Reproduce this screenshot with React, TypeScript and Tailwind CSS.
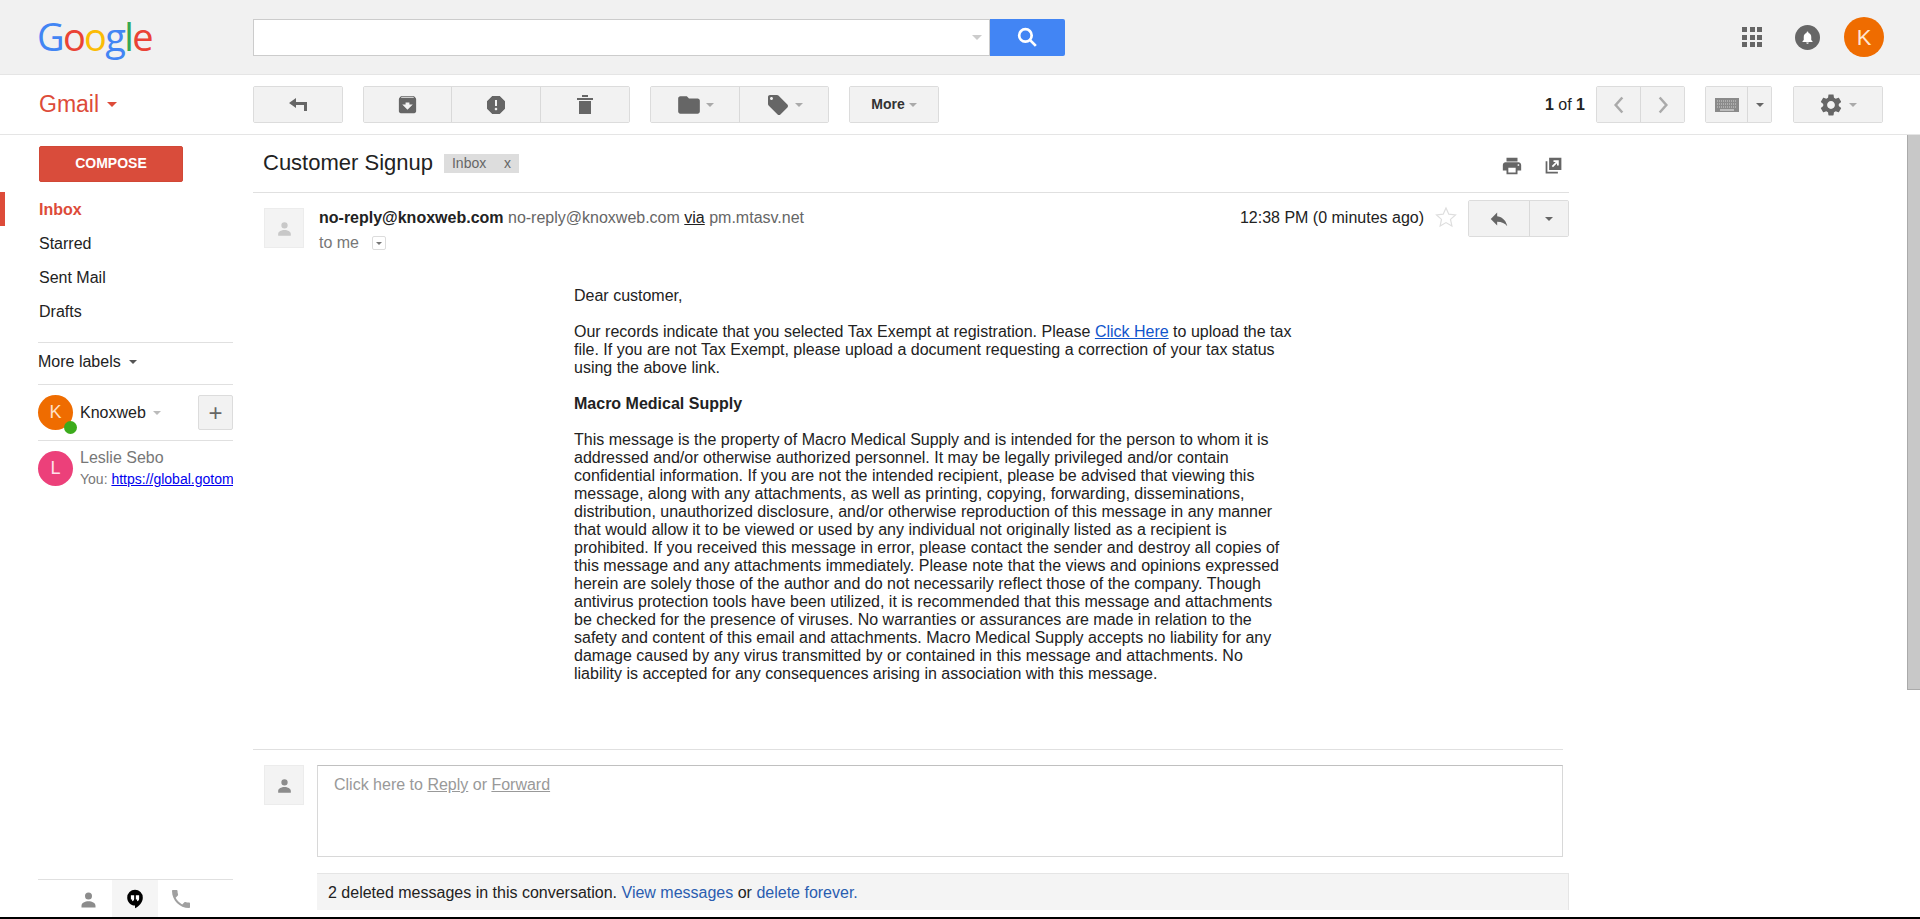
import React from "react";

const Ico = ({ d, className }: { d: string; className: string }) => (
  <svg viewBox="0 0 24 24" className={className} fill="currentColor">
    <path d={d} />
  </svg>
);

const paths = {
  reply: "M10 9V5l-7 7 7 7v-4.1c5 0 8.5 1.6 11 5.1-1-5-4-10-11-11z",
  archive:
    "M20.54 5.23l-1.39-1.68C18.88 3.21 18.47 3 18 3H6c-.47 0-.88.21-1.16.55L3.46 5.23C3.17 5.57 3 6.02 3 6.5V19c0 1.1.9 2 2 2h14c1.1 0 2-.9 2-2V6.5c0-.48-.17-.93-.46-1.27zM12 17.5L6.5 12H10v-2h4v2h3.5L12 17.5zM5.12 5l.81-1h12l.94 1H5.12z",
  spam: "M15.73 3H8.27L3 8.27v7.46L8.27 21h7.46L21 15.73V8.27L15.73 3zM12 17.3c-.72 0-1.3-.58-1.3-1.3 0-.72.58-1.3 1.3-1.3.72 0 1.3.58 1.3 1.3 0 .72-.58 1.3-1.3 1.3zm1-4.3h-2V7h2v6z",
  folder: "M10 4H4c-1.1 0-2 .9-2 2v12c0 1.1.9 2 2 2h16c1.1 0 2-.9 2-2V8c0-1.1-.9-2-2-2h-8l-2-2z",
  tag: "M21.41 11.58l-9-9C12.05 2.22 11.55 2 11 2H4c-1.1 0-2 .9-2 2v7c0 .55.22 1.05.59 1.42l9 9c.36.36.86.58 1.41.58.55 0 1.05-.22 1.41-.59l7-7c.37-.36.59-.86.59-1.41 0-.55-.23-1.06-.59-1.42zM5.5 7C4.67 7 4 6.33 4 5.5S4.67 4 5.5 4 7 4.67 7 5.5 6.33 7 5.5 7z",
  gear: "M19.14 12.94c.04-.3.06-.61.06-.94 0-.32-.02-.64-.07-.94l2.03-1.58c.18-.14.23-.41.12-.61l-1.92-3.32c-.12-.22-.37-.29-.59-.22l-2.39.96c-.5-.38-1.03-.7-1.62-.94l-.36-2.54c-.04-.24-.24-.41-.48-.41h-3.84c-.24 0-.43.17-.47.41l-.36 2.54c-.59.24-1.13.57-1.62.94l-2.39-.96c-.22-.08-.47 0-.59.22L2.74 8.87c-.12.21-.08.47.12.61l2.03 1.58c-.05.3-.09.63-.09.94s.02.64.07.94l-2.03 1.58c-.18.14-.23.41-.12.61l1.92 3.32c.12.22.37.29.59.22l2.39-.96c.5.38 1.03.7 1.62.94l.36 2.54c.05.24.24.41.48.41h3.84c.24 0 .44-.17.47-.41l.36-2.54c.59-.24 1.13-.56 1.62-.94l2.39.96c.22.08.47 0 .59-.22l1.92-3.32c.12-.22.07-.47-.12-.61l-2.01-1.58zM12 15.6c-1.98 0-3.6-1.62-3.6-3.6s1.62-3.6 3.6-3.6 3.6 1.62 3.6 3.6-1.62 3.6-3.6 3.6z",
  print:
    "M19 8H5c-1.66 0-3 1.34-3 3v6h4v4h12v-4h4v-6c0-1.66-1.34-3-3-3zm-3 11H8v-5h8v5zm3-7c-.55 0-1-.45-1-1s.45-1 1-1 1 .45 1 1-.45 1-1 1zm-1-9H6v4h12V3z",
  phone:
    "M6.62 10.79c1.44 2.83 3.76 5.14 6.59 6.59l2.2-2.2c.27-.27.67-.36 1.02-.24 1.12.37 2.33.57 3.57.57.55 0 1 .45 1 1V20c0 .55-.45 1-1 1-9.39 0-17-7.61-17-17 0-.55.45-1 1-1h3.5c.55 0 1 .45 1 1 0 1.25.2 2.45.57 3.57.11.35.03.74-.25 1.02l-2.2 2.2z",
  person: "M12 4a4 4 0 1 1 0 8 4 4 0 0 1 0-8zM4 21v-2c0-3 4-5 8-5s8 2 8 5v2z",
};

const Caret = ({ className = "border-x-[4px] border-t-[4px] border-t-[#8a8a8a]" }: { className?: string }) => (
  <span className={`inline-block w-0 h-0 border-x-transparent ${className}`} />
);

const Btn = ({ w, children, last }: { w: string; children: React.ReactNode; last?: boolean }) => (
  <div className={`${w} flex items-center justify-center h-full bg-[#f2f2f2] text-[#666] ${last ? "" : "border-r border-[#d9d9d9]"}`}>
    {children}
  </div>
);

const Group = ({ children, className = "" }: { children: React.ReactNode; className?: string }) => (
  <div className={`flex h-[37px] border border-[#dcdcdc] rounded-[2px] overflow-hidden ${className}`}>{children}</div>
);

const Avatar = ({ tone }: { tone: string }) => (
  <div className={`w-[40px] h-[40px] flex items-center justify-center bg-[#f3f3f3] border border-[#ececec] shrink-0 ${tone}`}>
    <Ico d={paths.person} className="w-[19px] h-[19px]" />
  </div>
);

const NavRow = ({ label, active }: { label: string; active?: boolean }) => (
  <div
    className={`h-[34px] flex items-center pl-[39px] pt-[1px] text-[16px] ${
      active ? "font-bold text-[#dd4b39] shadow-[inset_5px_0_0_#dd4b39]" : "text-[#222]"
    }`}
  >
    {label}
  </div>
);

const Sidebar = () => (
  <div className="w-[253px] shrink-0 flex flex-col h-full">
    <div className="pl-[39px] pt-[11px]">
      <div className="w-[144px] h-[36px] pb-[2px] rounded-[2px] bg-[#d94c3b] border border-[#d14836] flex items-center justify-center text-white text-[14px] font-bold">
        COMPOSE
      </div>
    </div>
    <div className="mt-[10px]">
      <NavRow label="Inbox" active />
      <NavRow label="Starred" />
      <NavRow label="Sent Mail" />
      <NavRow label="Drafts" />
    </div>
    <div className="ml-[38px] w-[195px] mt-[14px] flex-1 flex flex-col">
      <div className="border-t border-[#e0e0e0] h-[42px] flex items-center gap-[8px] text-[16px] text-[#222] pb-[4px]">
        More labels <Caret className="border-x-[4px] border-t-[4px] border-t-[#555]" />
      </div>
      <div className="border-t border-[#e0e0e0] h-[56px] pt-[10px] flex items-start relative">
        <div className="relative w-[35px] h-[35px] rounded-full bg-[#ef6c00] text-[#ffe0c8] text-[18px] flex items-center justify-center">
          K
          <span className="absolute -right-[4px] -bottom-[4px] w-[13px] h-[13px] rounded-full bg-[#3cab1c]" />
        </div>
        <span className="ml-[7px] mt-[9px] leading-[18px] text-[16px] text-[#222]">Knoxweb</span>
        <Caret className="ml-[7px] mt-[16px] border-x-[4px] border-t-[4px] border-t-[#bbb]" />
        <div className="absolute right-0 top-[10px] w-[35px] h-[35px] bg-[#f2f2f2] border border-[#dcdcdc] rounded-[2px] flex items-center justify-center text-[#666] text-[24px] leading-none">
          +
        </div>
      </div>
      <div className="border-t border-[#e0e0e0] pt-[10px] flex">
        <div className="w-[35px] h-[35px] rounded-full bg-[#ec407a] text-[#ffe0ea] text-[18px] flex items-center justify-center shrink-0">
          L
        </div>
        <div className="ml-[7px] -mt-[2px] min-w-0 overflow-hidden whitespace-nowrap">
          <div className="text-[16px] text-[#777] leading-[18px]">Leslie Sebo</div>
          <div className="text-[14px] text-[#777] leading-[18px] mt-[3px]">
            You: <span className="text-[#0000ee] underline">https://global.gotomeeting.com</span>
          </div>
        </div>
      </div>
      <div className="mt-auto border-t border-[#e0e0e0] h-[38px] flex justify-center pr-[2px]">
        <div className="w-[46px] flex items-center justify-center text-[#8c8c8c] pt-[1px]">
          <Ico d={paths.person} className="w-[21px] h-[21px]" />
        </div>
        <div className="w-[46px] bg-[#f5f5f5] flex items-center justify-center pt-[1px]">
          <svg viewBox="0 0 24 24" className="w-[22px] h-[22px]">
            <path d="M12 2a8.5 8.5 0 0 0-8.5 8.5c0 4.7 3.8 8.5 8.5 8.5v3c4.5-2.2 8.5-6.4 8.5-11.5A8.5 8.5 0 0 0 12 2z" fill="#000" />
            <path d="M7.5 8h3.6v3.6c0 1.6-1 2.6-2.2 2.9v-2H7.5zM12.9 8h3.6v3.6c0 1.6-1 2.6-2.2 2.9v-2h-1.4z" fill="#fff" />
          </svg>
        </div>
        <div className="w-[46px] flex items-center justify-center text-[#a0a0a0] pt-[1px]">
          <Ico d={paths.phone} className="w-[24px] h-[24px]" />
        </div>
      </div>
    </div>
  </div>
);

const Body = () => (
  <div className="ml-[321px] mt-[38px] w-[720px] text-[16px] leading-[18px] text-[#222]">
    <p>Dear customer,</p>
    <p className="mt-[18px]">
      Our records indicate that you selected Tax Exempt at registration. Please{" "}
      <span className="text-[#15c] underline">Click Here</span> to upload the tax file. If you are not Tax Exempt,
      please upload a document requesting a correction of your tax status using the above link.
    </p>
    <p className="mt-[18px] font-bold">Macro Medical Supply</p>
    <p className="mt-[18px]">
      This message is the property of Macro Medical Supply and is intended for the person to whom it is addressed
      and/or otherwise authorized personnel. It may be legally privileged and/or contain confidential information. If
      you are not the intended recipient, please be advised that viewing this message, along with any attachments, as
      well as printing, copying, forwarding, disseminations, distribution, unauthorized disclosure, and/or otherwise
      reproduction of this message in any manner that would allow it to be viewed or used by any individual not
      originally listed as a recipient is prohibited. If you received this message in error, please contact the sender
      and destroy all copies of this message and any attachments immediately. Please note that the views and opinions
      expressed herein are solely those of the author and do not necessarily reflect those of the company. Though
      antivirus protection tools have been utilized, it is recommended that this message and attachments be checked
      for the presence of viruses. No warranties or assurances are made in relation to the safety and content of this
      email and attachments. Macro Medical Supply accepts no liability for any damage caused by any virus transmitted
      by or contained in this message and attachments. No liability is accepted for any consequences arising in
      association with this message.
    </p>
  </div>
);

const Message = () => (
  <div className="flex-1 min-w-0 flex flex-col h-full">
    <div className="w-[1316px] h-[58px] border-b border-[#e0e0e0] flex items-center pl-[10px] pr-[5px]">
      <span className="text-[22px] text-[#222] pb-[2px]">Customer Signup</span>
      <span className="ml-[11px] w-[75px] h-[19px] bg-[#dddddd] flex items-center justify-between pl-[8px] pr-[8px] text-[14px] text-[#666]">
        <span>Inbox</span>
        <span>x</span>
      </span>
      <div className="ml-auto flex items-center gap-[20px] text-[#666] mt-[4px]">
        <Ico d={paths.print} className="w-[22px] h-[22px]" />
        <svg viewBox="0 0 24 24" className="w-[21px] h-[21px]" fill="currentColor">
          <path d="M7 3h14v14H7zM3 7h2v12h12v2H3z" />
          <path d="M12 6h6v6h-2V9.4l-4.6 4.6-1.4-1.4L14.6 8H12z" fill="#fff" />
        </svg>
      </div>
    </div>
    <div className="w-[1316px] h-[56px] flex pl-[11px] pt-[15px]">
      <Avatar tone="text-[#c8c8c8]" />
      <div className="ml-[15px] pt-[1px] text-[16px] leading-[18px]">
        <div className="text-[#666] whitespace-nowrap">
          <span className="font-bold text-[#222]">no-reply@knoxweb.com</span> no-reply@knoxweb.com{" "}
          <span className="underline text-[#222]">via</span> pm.mtasv.net
        </div>
        <div className="mt-[7px] flex items-center text-[#777]">
          to me
          <span className="ml-[13px] w-[14px] h-[14px] border border-[#dcdcdc] rounded-[2px] flex items-center justify-center">
            <Caret className="border-x-[3px] border-t-[3px] border-t-[#777]" />
          </span>
        </div>
      </div>
      <div className="ml-auto flex items-start -mt-[8px]">
        <span className="text-[16px] leading-[18px] pt-[9px] text-[#222] whitespace-nowrap">12:38 PM (0 minutes ago)</span>
        <span className="ml-[10px] text-[#dedede] mt-[5px]">
          <svg viewBox="0 0 24 24" className="w-[24px] h-[24px]" fill="none" stroke="currentColor" strokeWidth="1.2">
            <path d="M12 3l2.8 6.2 6.7.7-5 4.5 1.4 6.6-5.9-3.4-5.9 3.4 1.4-6.6-5-4.5 6.7-.7z" />
          </svg>
        </span>
        <Group className="ml-[10px] w-[101px]">
          <Btn w="w-[61px]">
            <Ico d={paths.reply} className="w-[22px] h-[22px]" />
          </Btn>
          <Btn w="flex-1" last>
            <Caret className="border-x-[4px] border-t-[4px] border-t-[#666]" />
          </Btn>
        </Group>
      </div>
    </div>
    <Body />
    <div className="mt-auto w-[1310px] border-t border-[#e0e0e0] pt-[15px] pl-[11px] flex">
      <Avatar tone="text-[#8c8c8c]" />
      <div className="ml-[13px] w-[1246px] h-[92px] border border-[#d8d8d8] border-t-[#c0c0c0] pl-[16px] pt-[10px] text-[16px] leading-[18px] text-[#999]">
        Click here to <span className="underline">Reply</span> or <span className="underline">Forward</span>
      </div>
    </div>
    <div className="ml-[64px] mt-[16px] mb-[7px] w-[1252px] h-[37px] bg-[#f4f4f4] border-t border-r border-[#e5e5e5] flex items-center pl-[11px] pt-[1px] text-[16px] text-[#222]">
      <span>
        2 deleted messages in this conversation. <span className="text-[#2a5db0]">View messages</span> or{" "}
        <span className="text-[#2a5db0]">delete forever.</span>
      </span>
    </div>
  </div>
);

export default function App() {
  return (
    <div className="w-[1920px] h-[919px] overflow-hidden bg-white flex flex-col font-['Liberation_Sans',Arial,sans-serif]">
      {/* top bar */}
      <div className="h-[75px] shrink-0 bg-[#f1f1f1] border-b border-[#e5e5e5] flex items-center relative">
        <div className="w-[253px] pl-[37px] font-['Open_Sans',sans-serif] font-medium text-[38px] leading-none tracking-[-1.7px] pb-[2px]">
          <span className="text-[#4285f4]">G</span>
          <span className="text-[#ea4335]">o</span>
          <span className="text-[#fbbc05]">o</span>
          <span className="text-[#4285f4]">g</span>
          <span className="text-[#34a853]">l</span>
          <span className="text-[#ea4335]">e</span>
        </div>
        <div className="flex h-[37px] w-[812px]">
          <div className="flex-1 bg-white border border-[#cccccc] flex items-center justify-end pr-[7px]">
            <Caret className="border-x-[5px] border-t-[5px] border-t-[#cccccc]" />
          </div>
          <div className="w-[75px] bg-[#4285f4] rounded-r-[2px] flex items-center justify-center">
            <svg viewBox="0 0 24 24" className="w-[25px] h-[25px]" fill="none" stroke="#fff" strokeWidth="2.6">
              <circle cx="10" cy="10" r="6" />
              <path d="M14.5 14.5L20 20" />
            </svg>
          </div>
        </div>
        <div className="ml-auto flex items-center pr-[36px]">
          <div className="grid grid-cols-3 gap-[2.5px] w-[20px]">
            {Array.from({ length: 9 }).map((_, i) => (
              <span key={i} className="w-[5px] h-[5px] bg-[#666]" />
            ))}
          </div>
          <div className="ml-[33px] w-[25px] h-[25px] rounded-full bg-[#666] flex items-center justify-center">
            <svg viewBox="0 0 24 24" className="w-[15px] h-[15px]" fill="#fff">
              <path d="M12 22c1.1 0 2-.9 2-2h-4c0 1.1.9 2 2 2zm6-6v-5c0-3.1-1.6-5.6-4.5-6.3V4a1.5 1.5 0 0 0-3 0v.7C7.6 5.4 6 7.9 6 11v5l-2 2v1h16v-1z" />
            </svg>
          </div>
          <div className="ml-[24px] w-[40px] h-[40px] rounded-full bg-[#ef6c00] text-[#ffe6d2] text-[22px] flex items-center justify-center">
            K
          </div>
        </div>
      </div>
      {/* toolbar */}
      <div className="h-[60px] shrink-0 border-b border-[#e5e5e5] flex items-center">
        <div className="w-[253px] pl-[39px] text-[23px] text-[#dd4b39] flex items-center gap-[8px]">
          Gmail <Caret className="border-x-[5px] border-t-[5px] border-t-[#dd4b39]" />
        </div>
        <Group className="w-[90px]">
          <Btn w="flex-1" last>
            <svg viewBox="0 0 18 13" className="w-[18px] h-[13px]" fill="currentColor">
              <path d="M7 0L0 5l7 5V7h8v6h3V4H7z" />
            </svg>
          </Btn>
        </Group>
        <Group className="ml-[20px] w-[267px]">
          <Btn w="w-[88px]">
            <Ico d={paths.archive} className="w-[23px] h-[23px]" />
          </Btn>
          <Btn w="w-[89px]">
            <Ico d={paths.spam} className="w-[24px] h-[24px]" />
          </Btn>
          <Btn w="flex-1" last>
            <svg viewBox="0 0 18 19" className="w-[18px] h-[19px]" fill="currentColor">
              <path d="M3 6h12v13H3zM1 3h16v2H1zM6 0h6v2H6z" />
            </svg>
          </Btn>
        </Group>
        <Group className="ml-[20px] w-[179px]">
          <Btn w="w-[89px]">
            <Ico d={paths.folder} className="w-[26px] h-[26px]" />
            <Caret className="ml-[4px] border-x-[4px] border-t-[4px] border-t-[#aaa]" />
          </Btn>
          <Btn w="flex-1" last>
            <Ico d={paths.tag} className="w-[24px] h-[24px]" />
            <Caret className="ml-[5px] border-x-[4px] border-t-[4px] border-t-[#aaa]" />
          </Btn>
        </Group>
        <Group className="ml-[20px] w-[90px]">
          <Btn w="flex-1" last>
            <span className="text-[14px] font-bold text-[#333] mr-[4px]">More</span>
            <Caret className="border-x-[4px] border-t-[4px] border-t-[#aaa]" />
          </Btn>
        </Group>
        <div className="ml-auto flex items-center pr-[37px]">
          <span className="text-[16px] text-[#222] mr-[11px]">
            <b>1</b> of <b>1</b>
          </span>
          <Group className="w-[89px]">
            <Btn w="w-[44px]">
              <svg viewBox="0 0 24 24" className="w-[20px] h-[20px]" fill="none" stroke="#aaa" strokeWidth="3">
                <path d="M16 3l-8 9 8 9" />
              </svg>
            </Btn>
            <Btn w="flex-1" last>
              <svg viewBox="0 0 24 24" className="w-[20px] h-[20px]" fill="none" stroke="#aaa" strokeWidth="3">
                <path d="M8 3l8 9-8 9" />
              </svg>
            </Btn>
          </Group>
          <Group className="ml-[20px] w-[67px]">
            <Btn w="w-[42px]">
              <svg viewBox="0 0 24 16" className="w-[24px] h-[16px]">
                <rect width="24" height="14" y="1" fill="#8a8a8a" />
                <path d="M2 4h20M2 7h20M2 10h20" stroke="#d0d0d0" strokeDasharray="1 1" />
                <path d="M5 13h14" stroke="#eee" />
              </svg>
            </Btn>
            <Btn w="flex-1" last>
              <Caret className="border-x-[4px] border-t-[4px] border-t-[#666]" />
            </Btn>
          </Group>
          <Group className="ml-[21px] w-[90px]">
            <Btn w="flex-1" last>
              <Ico d={paths.gear} className="w-[26px] h-[26px]" />
              <Caret className="ml-[5px] mr-[2px] border-x-[4px] border-t-[4px] border-t-[#aaa]" />
            </Btn>
          </Group>
        </div>
      </div>
      {/* content */}
      <div className="flex-1 min-h-0 flex relative">
        <Sidebar />
        <Message />
        <div className="absolute right-0 top-0 w-[13px] h-[555px] bg-[#c8c8c8] border-l border-b border-[#aaaaaa]" />
      </div>
      <div className="h-[2px] shrink-0 bg-black" />
    </div>
  );
}
